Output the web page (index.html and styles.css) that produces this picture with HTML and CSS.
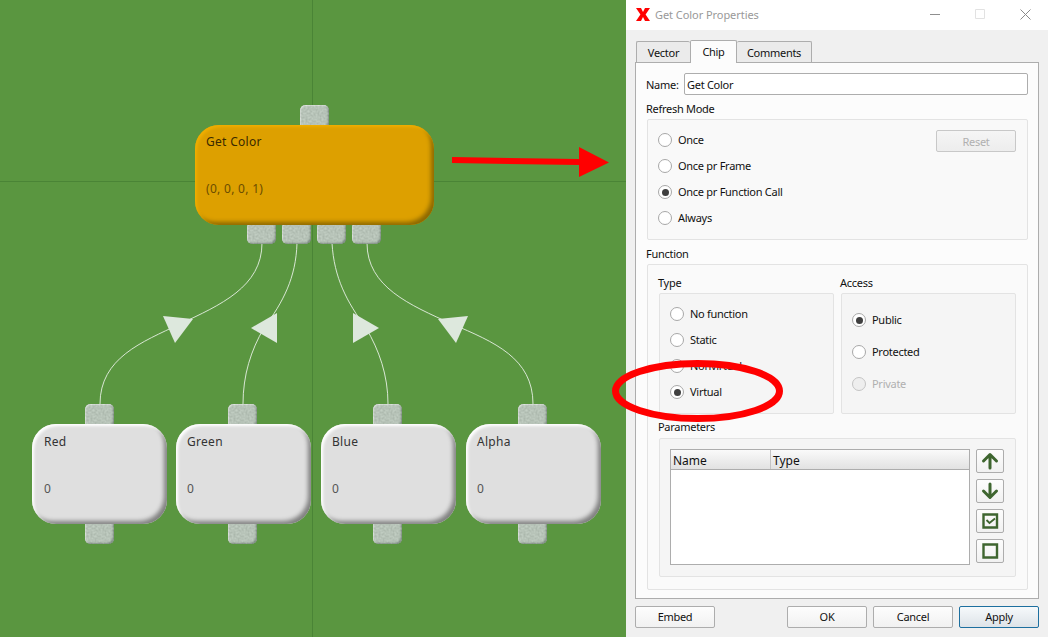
FILE: index.html
```html
<!DOCTYPE html>
<html lang="en">
<head>
<meta charset="utf-8">
<title>Get Color Properties</title>
<link rel="stylesheet" href="styles.css">
</head>
<body>
<div class="app">
  <div class="canvas">
    <svg class="defs" width="0" height="0" aria-hidden="true">
      <filter id="speckle" x="0" y="0" width="100%" height="100%" color-interpolation-filters="sRGB">
        <feTurbulence type="fractalNoise" baseFrequency="0.5" numOctaves="2" seed="4" result="n"/>
        <feColorMatrix in="n" type="matrix" values="1 0 0 0 0  1 0 0 0 0  1 0 0 0 0  0 0 0 0 1" result="g"/>
        <feComposite in="SourceGraphic" in2="g" operator="arithmetic" k1="0" k2="1" k3="0.15" k4="-0.075" result="b"/>
        <feComposite in="b" in2="SourceAlpha" operator="in"/>
      </filter>
    </svg>
    <svg class="wires" viewBox="0 0 626 637" width="626" height="637" aria-hidden="true">
      <path class="wire" d="M262 243C262 287 220 305 180 324C142 342 100 358 100 404"/>
      <path class="wire" d="M297 243C296 278 283 302 264 328C251 350 243 375 243 404"/>
      <path class="wire" d="M332 243C334 278 347 302 366 328C379 350 388 375 388 404"/>
      <path class="wire" d="M367 243C367 287 410 305 452 324C494 342 533 358 533 404"/>
      <path class="tri" d="M163 316L193 319L175 343Z"/>
      <path class="tri" d="M251 328L277 313L277 343Z"/>
      <path class="tri" d="M379 328L353 313L353 343Z"/>
      <path class="tri" d="M468 316L438 319L456 343Z"/>
    </svg>
    <div class="pin p-top"></div>
    <div class="pin p-o1"></div>
    <div class="pin p-o2"></div>
    <div class="pin p-o3"></div>
    <div class="pin p-o4"></div>
    <div class="pin p-r1"></div><div class="pin p-r2"></div>
    <div class="pin p-g1"></div><div class="pin p-g2"></div>
    <div class="pin p-b1"></div><div class="pin p-b2"></div>
    <div class="pin p-a1"></div><div class="pin p-a2"></div>
    <div class="node node-orange"><span>Get Color</span><span class="val">(0, 0, 0, 1)</span></div>
    <div class="node node-grey n-red"><span>Red</span><span class="val">0</span></div>
    <div class="node node-grey n-green"><span>Green</span><span class="val">0</span></div>
    <div class="node node-grey n-blue"><span>Blue</span><span class="val">0</span></div>
    <div class="node node-grey n-alpha"><span>Alpha</span><span class="val">0</span></div>
  </div>

  <div class="dialog">
    <div class="titlebar">
      <svg class="logo" viewBox="0 0 14 13" width="14" height="13" aria-hidden="true"><path d="M0 0H5L7 4L9 0H14L9.600 6.500L14 13H9L7 9L5 13H0L4.400 6.500Z"/></svg>
      <span class="title">Get Color Properties</span>
      <svg class="winctl" viewBox="0 0 110 12" width="110" height="12" aria-hidden="true">
        <path class="c-min" d="M0 6.500H10"/>
        <path class="c-max" d="M45.500 1.500H54.500V10.500H45.500Z"/>
        <path class="c-close" d="M90.500 1.500L100.500 11.500M100.500 1.500L90.500 11.500"/>
      </svg>
    </div>
    <div class="body">
      <div class="tabs">
        <div class="tab">Vector</div>
        <div class="tab tab-active">Chip</div>
        <div class="tab tab-last">Comments</div>
      </div>
      <div class="pane">
        <div class="name-row">
          <label class="name-label">Name:</label>
          <div class="input">Get Color</div>
        </div>
        <div class="sec-label">Refresh Mode</div>
        <div class="group group-refresh">
          <div class="radios">
            <div class="radio-row"><i class="radio"></i>Once</div>
            <div class="radio-row"><i class="radio"></i>Once pr Frame</div>
            <div class="radio-row"><i class="radio on"></i>Once pr Function Call</div>
            <div class="radio-row"><i class="radio"></i>Always</div>
          </div>
          <div class="btn btn-reset">Reset</div>
        </div>
        <div class="sec-label">Function</div>
        <div class="group group-function">
          <div class="cols">
            <div class="col">
              <div class="sub-label">Type</div>
              <div class="box box-type">
                <div class="radio-row"><i class="radio"></i>No function</div>
                <div class="radio-row"><i class="radio"></i>Static</div>
                <div class="radio-row"><i class="radio"></i>Nonvirtual</div>
                <div class="radio-row"><i class="radio on"></i>Virtual</div>
              </div>
            </div>
            <div class="col">
              <div class="sub-label">Access</div>
              <div class="box box-access">
                <div class="radio-row tall"><i class="radio on"></i>Public</div>
                <div class="radio-row tall"><i class="radio"></i>Protected</div>
                <div class="radio-row tall disabled"><i class="radio"></i>Private</div>
              </div>
            </div>
          </div>
          <div class="sec-label params-label">Parameters</div>
          <div class="box box-params">
            <div class="table">
              <div class="thead"><div class="th th-name">Name</div><div class="th">Type</div></div>
            </div>
            <div class="tools">
              <div class="btn tool"><svg viewBox="0 0 20 20" width="20" height="20" aria-hidden="true"><path class="ico" d="M10 17V4M3.500 10L10 3.500L16.500 10"/></svg></div>
              <div class="btn tool"><svg viewBox="0 0 20 20" width="20" height="20" aria-hidden="true"><path class="ico" d="M10 3V16M3.500 10L10 16.500L16.500 10"/></svg></div>
              <div class="btn tool"><svg viewBox="0 0 20 20" width="20" height="20" aria-hidden="true"><path class="ico-box" d="M3.500 3.500H17V16.500H3.500Z"/><path class="ico-chk" d="M6.500 9L9.500 12L15 7.500"/></svg></div>
              <div class="btn tool"><svg viewBox="0 0 20 20" width="20" height="20" aria-hidden="true"><path class="ico-box" d="M3.500 3.500H17V16.500H3.500Z"/></svg></div>
            </div>
          </div>
        </div>
      </div>
      <div class="footer">
        <div class="btn btn-foot">Embed</div>
        <div class="footer-right">
          <div class="btn btn-foot">OK</div>
          <div class="btn btn-foot">Cancel</div>
          <div class="btn btn-foot btn-default">Apply</div>
        </div>
      </div>
    </div>
  </div>

  <svg class="annot" viewBox="0 0 1048 637" width="1048" height="637" aria-hidden="true">
    <path class="arrow" d="M452 157L579 159V147L609 162.500L579 177V165L452 163Z"/>
    <ellipse class="ring" cx="697.500" cy="391" rx="82" ry="27.500"/>
  </svg>
</div>
</body>
</html>
```
FILE: styles.css
```css
* { box-sizing: border-box; }
html, body { margin: 0; padding: 0; }
body { width: 1048px; height: 637px; overflow: hidden; font-family: "Noto Sans", "Open Sans", sans-serif; font-size: 11px; letter-spacing: -0.280px; color: #111; }

.app { position: relative; display: flex; width: 1048px; height: 637px; }

/* canvas */
.canvas {
  position: relative; width: 626px; height: 637px; flex: none; overflow: hidden;
  background-color: #5a9640;
  background-image: linear-gradient(#4a8436, #4a8436), linear-gradient(#4a8436, #4a8436);
  background-size: 1px 100%, 100% 1px;
  background-position: 312px 0, 0 181px;
  background-repeat: no-repeat;
}
.defs { position: absolute; }
.wires { position: absolute; left: 0; top: 0; }
.wire { fill: none; stroke: #e6efe4; stroke-width: 0.900; }
.tri { fill: #dde8dd; }

.pin {
  position: absolute; width: 29px; height: 20px; border-radius: 5px;
  background: #b7c3b8;
  box-shadow: inset 1px 1px 1px #d6ddd6, inset -2px -2px 2px -1px #7f8e83;
  filter: url(#speckle);
}
.p-top { left: 300px; top: 105px; height: 24px; }
.p-o1 { left: 247px; top: 222px; height: 22px; }
.p-o2 { left: 282px; top: 222px; height: 22px; }
.p-o3 { left: 317px; top: 222px; height: 22px; }
.p-o4 { left: 352px; top: 222px; height: 22px; }
.p-r1 { left: 85px; top: 404px; height: 24px; }
.p-r2 { left: 85px; top: 520px; height: 24px; }
.p-g1 { left: 228px; top: 404px; height: 24px; }
.p-g2 { left: 228px; top: 520px; height: 24px; }
.p-b1 { left: 373px; top: 404px; height: 24px; }
.p-b2 { left: 373px; top: 520px; height: 24px; }
.p-a1 { left: 518px; top: 404px; height: 24px; }
.p-a2 { left: 518px; top: 520px; height: 24px; }

.node {
  position: absolute; display: flex; flex-direction: column; gap: 31px;
  padding: 9px 11px; border-radius: 24px;
  font-size: 12px; line-height: 16px; letter-spacing: 0.300px; color: #333;
}
.node-orange {
  left: 195px; top: 125px; width: 239px; height: 100px;
  background: #dda000; color: #3a2a00;
  box-shadow: inset 2px 2px 3px #efae00, inset -4px -4px 4px -1px #8c6800;
}
.node-orange .val { color: #6b4d00; }
.node-grey {
  top: 424px; width: 135px; height: 100px; padding-top: 10px;
  background: #dfdfdf;
  box-shadow: inset 2px 2px 3px #fff, inset -4px -4px 4px -1px #808080;
}
.node-grey .val { color: #555; }
.n-red { left: 32px; padding-left: 12px; }
.n-green { left: 176px; }
.n-blue { left: 321px; }
.n-alpha { left: 466px; }

/* dialog */
.dialog { flex: 1; display: flex; flex-direction: column; background: #f0f0f0; }
.titlebar { height: 30px; flex: none; background: #fff; display: flex; align-items: center; padding: 0 0 2px 9px; }
.logo { flex: none; margin-right: 5px; margin-left: 1px; }
.logo path { fill: #f00; }
.title { color: #999; letter-spacing: -0.060px; }
.winctl { margin-left: auto; margin-right: 8px; flex: none; }
.c-min { stroke: #8f8f8f; fill: none; }
.c-max { stroke: #e2e2e2; fill: none; }
.c-close { stroke: #8a8a8a; fill: none; }

.body { flex: 1; display: flex; flex-direction: column; padding: 0 9px 9px; min-height: 0; }
.tabs { display: flex; align-items: flex-end; height: 32px; flex: none; padding-left: 1px; }
.tab {
  height: 21px; padding: 0 9px; line-height: 21px; display: flex; align-items: center; justify-content: center;
  border: 1px solid #adadad; border-bottom: 0; border-right: 0; border-radius: 2px 2px 0 0;
  background: #ebebeb; width: 54px;
}
.tab-active { height: 23px; width: 47px; background: #fcfcfc; border-right: 1px solid #adadad; position: relative; top: 1px; padding-bottom: 2px; }
.tab-last { width: 75px; border-left: 0; border-right: 1px solid #adadad; }

.pane {
  height: 537px; flex: none; border: 1px solid #adadad; background: #fcfcfc;
  padding: 10px 10px 8px; display: flex; flex-direction: column;
}
.name-row { display: flex; align-items: center; height: 22px; flex: none; }
.name-label { width: 38px; flex: none; }
.input {
  flex: 1; height: 22px; border: 1px solid #adadad; border-radius: 2px; background: #fff;
  line-height: 20px; padding-left: 2px; padding-top: 1px;
}
.sec-label { height: 24px; flex: none; padding-top: 6px; line-height: 16px; }

.group { margin-left: 1px; border: 1px solid #e3e3e3; border-radius: 2px; flex: none; }
.group-refresh {
  height: 121px; background: #f9f9f9; padding: 7px 11px 0 10px;
  display: flex; justify-content: space-between; align-items: flex-start;
}
.group-function { height: 326px; background: #fafafa; padding: 10px 11px 0 10px; display: flex; flex-direction: column; }

.radios { display: flex; flex-direction: column; }
.radio-row { display: flex; align-items: center; height: 26px; gap: 6px; padding-bottom: 2px; }
.radio-row.tall { height: 32px; }
.radio {
  width: 14px; height: 14px; flex: none; border-radius: 50%; border: 1px solid #a8a8a8; margin-top: 2px;
  background: #fff; display: flex; align-items: center; justify-content: center;
}
.radio.on::after { content: ""; width: 7px; height: 7px; border-radius: 50%; background: #3f3f3f; }
.disabled { color: #b0b0b0; }
.disabled .radio { background: #eee; border-color: #c4c4c4; }

.btn {
  border: 1px solid #adadad; border-radius: 2px; display: flex; align-items: center; justify-content: center;
  background: linear-gradient(#fdfdfd, #f1f1f1); flex: none;
}
.btn-reset { width: 80px; height: 22px; margin-top: 3px; color: #b0b0b0; border-color: #c8c8c8; background: linear-gradient(#f5f5f5, #ededed); }

.cols { display: flex; gap: 6px; flex: none; }
.col { width: 176px; flex: none; }
.sub-label { height: 18px; line-height: 16px; }
.box { margin-left: 1px; border: 1px solid #e3e3e3; border-radius: 2px; background: #f5f5f5; }
.box-type { width: 175px; height: 121px; padding: 7px 10px 0; }
.box-access { width: 175px; height: 121px; padding: 10px 10px 0; }
.params-label { padding-top: 5px; }
.box-params { width: 357px; height: 139px; padding: 10px 0 0 10px; display: flex; gap: 6px; align-items: flex-start; flex: none; }

.table { width: 300px; height: 116px; border: 1px solid #adadad; background: #fff; flex: none; }
.thead { display: flex; height: 20px; border-bottom: 1px solid #adadad; background: linear-gradient(#fafafa, #e2e2e2); }
.th { line-height: 22px; padding-left: 2px; font-size: 12px; letter-spacing: 0; }
.th-name { width: 100px; border-right: 1px solid #c4c4c4; }

.tools { display: flex; flex-direction: column; gap: 6px; flex: none; }
.tool { width: 28px; height: 24px; }
.ico { fill: none; stroke: #3f6630; stroke-width: 3; stroke-linecap: round; stroke-linejoin: round; }
.ico-box { fill: none; stroke: #3f6630; stroke-width: 2.400; }
.ico-chk { fill: none; stroke: #3f6630; stroke-width: 1.800; }

.footer { display: flex; justify-content: space-between; margin-top: 7px; height: 22px; flex: none; }
.footer-right { display: flex; gap: 6px; }
.btn-foot { width: 80px; height: 22px; padding-bottom: 2px; }
.btn-default { border-color: #1d6f9f; background: linear-gradient(#f6f9fb, #dde3e8); }

/* annotations drawn over both panels */
.annot { position: absolute; left: 0; top: 0; pointer-events: none; }
.arrow { fill: #f00; }
.ring { fill: none; stroke: #f00; stroke-width: 7; }
```
